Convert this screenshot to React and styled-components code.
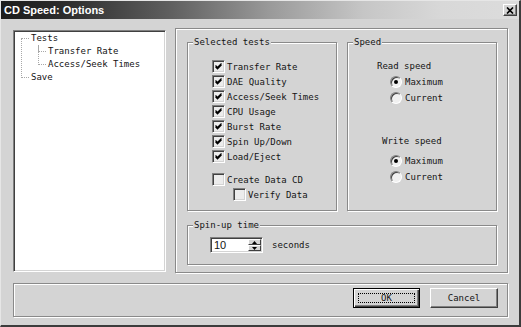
import React from 'react';
import styled, { createGlobalStyle } from 'styled-components';

const GlobalStyle = createGlobalStyle`
  html, body {
    margin: 0;
    padding: 0;
    background: #d4d4d4;
  }
  body {
    font-family: "DejaVu Sans Mono", "Liberation Mono", monospace;
    font-size: 9px;
    color: #141414;
  }
`;

const Window = styled.div`
  box-sizing: border-box;
  width: 521px;
  height: 327px;
  display: flex;
  flex-direction: column;
  background: #d4d4d4;
  border-top: 1px solid #e6e6e6;
  border-left: 1px solid #e6e6e6;
  border-right: 2px solid #3c3c3c;
  border-bottom: 2px solid #3c3c3c;
  overflow: hidden;
`;

const TitleBar = styled.div`
  height: 18px;
  flex: none;
  display: flex;
  align-items: center;
  justify-content: space-between;
  padding: 0 2px 0 3px;
  background: linear-gradient(90deg, #1c1c1c 0%, #2c2c2c 12%, #606060 33%, #9a9a9a 52%, #c6c6c6 70%, #d8d8d8 85%, #dcdcdc 100%);
`;

const TitleText = styled.span`
  font-family: "Liberation Sans", Arial, sans-serif;
  font-weight: bold;
  font-size: 11px;
  color: #fff;
`;

const CloseButton = styled.div`
  box-sizing: border-box;
  width: 14px;
  height: 12px;
  display: flex;
  align-items: center;
  justify-content: center;
  background: #d4d4d4;
  border: 1px solid;
  border-color: #fff #404040 #404040 #fff;
  box-shadow: inset -1px -1px 0 #808080;
`;

const Body = styled.div`
  flex: 1;
  display: flex;
  flex-direction: column;
  padding: 9px 11px 8px 12px;
`;

const TopRow = styled.div`
  display: flex;
  gap: 9px;
  height: 245px;
`;

const Tree = styled.div`
  box-sizing: border-box;
  width: 153px;
  margin: 2px 0 1px;
  background: #fff;
  border: 1px solid;
  border-color: #808080 #fff #fff #808080;
  box-shadow: inset 1px 1px 0 #404040, inset -1px -1px 0 #d4d4d4;
  padding-top: 1px;
`;

const TreeRow = styled.div`
  position: relative;
  height: 13px;
  line-height: 13px;
  padding-left: ${p => p.$level * 17 + 17}px;
  white-space: nowrap;

  &::before {
    content: "";
    position: absolute;
    left: ${p => p.$level * 17 + 7}px;
    top: 6px;
    width: 8px;
    border-top: 1px dotted #a8a8a8;
  }

  &::after {
    content: "";
    position: absolute;
    left: ${p => p.$level * 17 + 7}px;
    bottom: 6px;
    height: ${p => p.$up}px;
    border-left: 1px dotted #a8a8a8;
  }
`;

const Frame = styled.div`
  box-sizing: border-box;
  border: 1px solid #8a8a8a;
  box-shadow: inset 1px 1px 0 #fff, 1px 1px 0 #fff;
`;

const RightFrame = styled(Frame)`
  flex: 1;
  display: flex;
  flex-direction: column;
  padding: 13px 10px 7px 11px;
`;

const GroupRow = styled.div`
  display: flex;
  gap: 10px;
  height: 169px;
`;

const GroupBox = styled(Frame)`
  position: relative;
  flex: 1;
  margin-top: ${p => p.$top || 0}px;
  height: ${p => p.$height ? `${p.$height}px` : 'auto'};
`;

const Legend = styled.span`
  position: absolute;
  top: -7px;
  left: 5px;
  padding: 0 1px;
  line-height: 13px;
  background: #d4d4d4;
`;

const TestList = styled.div`
  padding: 16px 0 0 24px;
`;

const CheckRow = styled.div`
  display: flex;
  align-items: center;
  gap: 2px;
  height: 15px;
  margin-top: ${p => p.$gap || 0}px;
  padding-left: ${p => p.$indent || 0}px;
`;

const Box = styled.span`
  box-sizing: border-box;
  width: 13px;
  height: 13px;
  flex: none;
  display: flex;
  align-items: center;
  justify-content: center;
  background: #ececec;
  border: 1px solid;
  border-color: #808080 #fff #fff #808080;
  box-shadow: inset 1px 1px 0 #404040, inset -1px -1px 0 #d4d4d4;
`;

const SpeedBody = styled.div`
  padding-top: 16px;
`;

const SpeedTitle = styled.div`
  height: 15px;
  line-height: 15px;
  padding-left: ${p => p.$indent}px;
  margin-top: ${p => p.$gap || 0}px;
`;

const RadioRow = styled.div`
  display: flex;
  align-items: center;
  gap: 3px;
  height: 16px;
  padding-left: 42px;
  margin-top: ${p => p.$gap || 0}px;
`;

const RadioDot = styled.span`
  box-sizing: border-box;
  width: 12px;
  height: 12px;
  flex: none;
  border-radius: 50%;
  display: flex;
  align-items: center;
  justify-content: center;
  background: #f0f0f0;
  border: 1px solid;
  border-color: #808080 #fff #fff #808080;
  box-shadow: inset 1px 1px 0 #404040;

  &::after {
    content: "";
    width: 4px;
    height: 4px;
    border-radius: 50%;
    background: ${p => p.$on ? '#000' : 'transparent'};
  }
`;

const SpinRow = styled.div`
  display: flex;
  align-items: center;
  gap: 9px;
  padding: 11px 0 0 22px;
`;

const SpinField = styled.div`
  box-sizing: border-box;
  width: 53px;
  height: 16px;
  display: flex;
  background: #fff;
  border: 1px solid;
  border-color: #808080 #fff #fff #808080;
  box-shadow: inset 1px 1px 0 #404040, inset -1px -1px 0 #d4d4d4;
  padding: 1px;
`;

const SpinValue = styled.span`
  flex: 1;
  padding-left: 2px;
  line-height: 12px;
  font-family: "Liberation Sans", Arial, sans-serif;
  font-size: 11px;
`;

const SpinButtons = styled.div`
  width: 13px;
  display: flex;
  flex-direction: column;
`;

const SpinButton = styled.span`
  box-sizing: border-box;
  flex: 1;
  display: flex;
  align-items: center;
  justify-content: center;
  background: #d4d4d4;
  border: 1px solid;
  border-color: #fff #404040 #404040 #fff;
`;

const ButtonBar = styled(Frame)`
  margin-top: 10px;
  height: 34px;
  display: flex;
  justify-content: flex-end;
  align-items: flex-start;
  gap: 10px;
  padding: 4px 9px 0 0;
`;

const Button = styled.div`
  box-sizing: border-box;
  width: ${p => p.$w}px;
  height: 20px;
  display: flex;
  align-items: center;
  justify-content: center;
  background: #d4d4d4;
  border: 1px solid;
  border-color: ${p => p.$default ? '#000' : '#fff #404040 #404040 #fff'};
  box-shadow: ${p => p.$default
    ? 'inset 1px 1px 0 #fff, inset -1px -1px 0 #404040, inset -2px -2px 0 #808080'
    : 'inset -1px -1px 0 #808080'};
`;

const FocusRing = styled.span`
  box-sizing: border-box;
  width: calc(100% - 8px);
  height: calc(100% - 8px);
  display: flex;
  align-items: center;
  justify-content: center;
  border: 1px dotted #000;
`;

function CheckBox({ label, checked, indent, gap }) {
  return (
    <CheckRow $indent={indent} $gap={gap}>
      <Box>
        {checked && (
          <svg width="7" height="7" viewBox="0 0 7 7">
            <path d="M0.5 2.5 L2.5 4.5 L6.5 0.5 M0.5 3.8 L2.5 5.8 L6.5 1.8" stroke="#000" strokeWidth="1.2" fill="none" />
          </svg>
        )}
      </Box>
      <span>{label}</span>
    </CheckRow>
  );
}

function Radio({ label, on, gap }) {
  return (
    <RadioRow $gap={gap}>
      <RadioDot $on={on} />
      <span>{label}</span>
    </RadioRow>
  );
}

const tests = [
  'Transfer Rate',
  'DAE Quality',
  'Access/Seek Times',
  'CPU Usage',
  'Burst Rate',
  'Spin Up/Down',
  'Load/Eject',
];

export default function App() {
  return (
    <>
      <GlobalStyle />
      <Window>
        <TitleBar>
          <TitleText>CD Speed: Options</TitleText>
          <CloseButton>
            <svg width="8" height="7" viewBox="0 0 8 7">
              <path d="M1 0.5 L7 6.5 M7 0.5 L1 6.5" stroke="#000" strokeWidth="1.6" />
            </svg>
          </CloseButton>
        </TitleBar>
        <Body>
          <TopRow>
            <Tree>
              <TreeRow $level={0} $up={0}>Tests</TreeRow>
              <TreeRow $level={1} $up={7}>Transfer Rate</TreeRow>
              <TreeRow $level={1} $up={20}>Access/Seek Times</TreeRow>
              <TreeRow $level={0} $up={39}>Save</TreeRow>
            </Tree>
            <RightFrame>
              <GroupRow>
                <GroupBox>
                  <Legend>Selected tests</Legend>
                  <TestList>
                    {tests.map(t => <CheckBox key={t} label={t} checked />)}
                    <CheckBox label="Create Data CD" gap={8} />
                    <CheckBox label="Verify Data" indent={21} />
                  </TestList>
                </GroupBox>
                <GroupBox>
                  <Legend>Speed</Legend>
                  <SpeedBody>
                    <SpeedTitle $indent={29}>Read speed</SpeedTitle>
                    <Radio label="Maximum" on />
                    <Radio label="Current" />
                    <SpeedTitle $indent={34} $gap={28}>Write speed</SpeedTitle>
                    <Radio label="Maximum" on gap={4} />
                    <Radio label="Current" />
                  </SpeedBody>
                </GroupBox>
              </GroupRow>
              <GroupBox $top={14} $height={40}>
                <Legend>Spin-up time</Legend>
                <SpinRow>
                  <SpinField>
                    <SpinValue>10</SpinValue>
                    <SpinButtons>
                      <SpinButton>
                        <svg width="5" height="3" viewBox="0 0 5 3"><path d="M2.5 0 L5 3 L0 3 Z" fill="#000" /></svg>
                      </SpinButton>
                      <SpinButton>
                        <svg width="5" height="3" viewBox="0 0 5 3"><path d="M0 0 L5 0 L2.5 3 Z" fill="#000" /></svg>
                      </SpinButton>
                    </SpinButtons>
                  </SpinField>
                  <span>seconds</span>
                </SpinRow>
              </GroupBox>
            </RightFrame>
          </TopRow>
          <ButtonBar>
            <Button $w={67} $default>
              <FocusRing>OK</FocusRing>
            </Button>
            <Button $w={68}>Cancel</Button>
          </ButtonBar>
        </Body>
      </Window>
    </>
  );
}
